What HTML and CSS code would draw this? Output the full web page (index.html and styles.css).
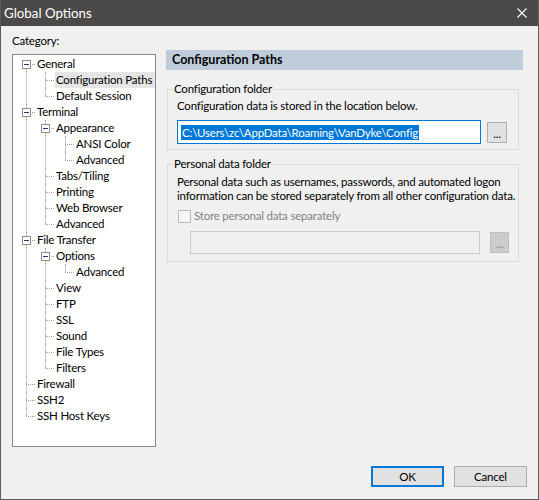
FILE: index.html
```html
<!DOCTYPE html>
<html>
<head>
<meta charset="utf-8">
<link rel="stylesheet" href="styles.css">
</head>
<body>
<div class="window">
  <div class="titlebar">
    <span class="title">Global Options</span>
    <svg class="close" width="10" height="10" viewBox="0 0 10 10"><path d="M0.5 0.5L9.5 9.5M9.5 0.5L0.5 9.5" stroke="#fff" stroke-width="1.1" fill="none"/></svg>
  </div>
  <div class="content">
    <div class="leftcol">
      <div class="cat-label">Category:</div>
      <div class="tree">
        <ul>
          <li><span class="tog"></span><span class="lbl">General</span>
            <ul>
              <li><span class="lbl sel">Configuration Paths</span></li>
              <li><span class="lbl">Default Session</span></li>
            </ul>
          </li>
          <li><span class="tog"></span><span class="lbl">Terminal</span>
            <ul>
              <li><span class="tog"></span><span class="lbl">Appearance</span>
                <ul>
                  <li><span class="lbl">ANSI Color</span></li>
                  <li><span class="lbl">Advanced</span></li>
                </ul>
              </li>
              <li><span class="lbl">Tabs/Tiling</span></li>
              <li><span class="lbl">Printing</span></li>
              <li><span class="lbl">Web Browser</span></li>
              <li><span class="lbl">Advanced</span></li>
            </ul>
          </li>
          <li><span class="tog"></span><span class="lbl">File Transfer</span>
            <ul>
              <li><span class="tog"></span><span class="lbl">Options</span>
                <ul>
                  <li><span class="lbl">Advanced</span></li>
                </ul>
              </li>
              <li><span class="lbl">View</span></li>
              <li><span class="lbl">FTP</span></li>
              <li><span class="lbl">SSL</span></li>
              <li><span class="lbl">Sound</span></li>
              <li><span class="lbl">File Types</span></li>
              <li><span class="lbl">Filters</span></li>
            </ul>
          </li>
          <li><span class="lbl">Firewall</span></li>
          <li><span class="lbl">SSH2</span></li>
          <li><span class="lbl">SSH Host Keys</span></li>
        </ul>
      </div>
    </div>
    <div class="rightcol">
      <div class="header">Configuration Paths</div>
      <fieldset class="group g1">
        <legend>Configuration folder</legend>
        <div class="desc">Configuration data is stored in the location below.</div>
        <div class="pathrow">
          <div class="textbox focus"><span class="selected">C:\Users\zc\AppData\Roaming\VanDyke\Config</span></div>
          <div class="dots">...</div>
        </div>
      </fieldset>
      <fieldset class="group g2">
        <legend>Personal data folder</legend>
        <div class="desc2">Personal data such as usernames, passwords, and automated logon<br>information can be stored separately from all other configuration data.</div>
        <div class="checkrow">
          <span class="checkbox"></span>
          <span class="disabled-text">Store personal data separately</span>
        </div>
        <div class="pathrow2">
          <div class="textbox disabled"></div>
          <div class="dots dis">...</div>
        </div>
      </fieldset>
    </div>
  </div>
  <div class="footer">
    <div class="btn default">OK</div>
    <div class="btn">Cancel</div>
  </div>
</div>
</body>
</html>
```
FILE: styles.css
```css
html, body {
  margin: 0;
  padding: 0;
  background: #f0f0f0;
}
body {
  font-family: Lato, "Noto Sans", sans-serif;
  font-size: 11.5px;
  letter-spacing: -0.2px;
  color: #000;
}
.window {
  width: 539px;
  height: 500px;
  box-sizing: border-box;
  border: 1px solid #5c5c5c;
  border-top: none;
  background: #f0f0f0;
  display: flex;
  flex-direction: column;
}
.titlebar {
  height: 26px;
  background: #4b4a48;
  display: flex;
  align-items: center;
  justify-content: space-between;
  padding: 0 11px 0 3px;
  flex: none;
}
.title {
  color: #fff;
  font-size: 13.3px;
  letter-spacing: 0;
  line-height: 26px;
}
.close {
  display: block;
}
.content {
  flex: 1;
  display: flex;
  align-items: flex-start;
  gap: 10px;
  padding: 7px 0 0 11px;
}
.leftcol {
  width: 144px;
  flex: none;
}
.cat-label {
  line-height: 16px;
  height: 16px;
}
.tree {
  margin-top: 5px;
  width: 144px;
  height: 393px;
  box-sizing: border-box;
  border: 1px solid #828790;
  background: #fff;
  padding-top: 1px;
  overflow: hidden;
}
.tree ul {
  list-style: none;
  margin: 0;
  padding: 0;
}
.tree ul ul {
  margin-left: -4px;
}
.tree ul ul ul {
  margin-left: -3px;
}
.tree li {
  position: relative;
  padding-left: 23px;
  line-height: 16px;
  white-space: nowrap;
}
.tree li::before {
  content: "";
  position: absolute;
  left: 13px;
  top: 8px;
  width: 9px;
  border-top: 1px dotted #a0a0a0;
}
.tree li::after {
  content: "";
  position: absolute;
  left: 13px;
  top: 0;
  bottom: 0;
  border-left: 1px dotted #a0a0a0;
}
.tree li:last-child::after {
  bottom: auto;
  height: 8px;
}
.tree > ul > li:first-child::after {
  top: 9px;
}
.tog {
  position: absolute;
  left: 9px;
  top: 4px;
  width: 9px;
  height: 9px;
  box-sizing: border-box;
  border: 1px solid #8e8f8f;
  background: #fff;
  z-index: 1;
}
.tog::before {
  content: "";
  position: absolute;
  left: 1px;
  top: 3px;
  width: 5px;
  height: 1px;
  background: #1c3d75;
}
.lbl {
  display: inline-block;
  padding: 0 3px 0 1px;
  height: 16px;
}
.lbl.sel {
  background: #e5e5e5;
}
.rightcol {
  margin-top: 17px;
  width: 357px;
  flex: none;
}
.header {
  height: 20px;
  line-height: 20px;
  background: #bfcddb;
  font-weight: bold;
  font-size: 12.5px;
  letter-spacing: 0;
  padding-left: 6px;
}
.group {
  margin: 0 4px 0 1px;
  border: 1px solid #dcdcdc;
  padding: 0 9px 5px 9px;
  min-width: 0;
}
.group legend {
  line-height: 16px;
  padding: 0 1px;
  margin-left: -4px;
}
.g1 {
  margin-top: 11px;
}
.g1 .desc {
  line-height: 16px;
  margin-top: 1px;
  white-space: nowrap;
}
.pathrow {
  display: flex;
  align-items: center;
  gap: 6px;
  margin-top: 6px;
}
.textbox {
  height: 24px;
  width: 304px;
  box-sizing: border-box;
  border: 1px solid #7a7a7a;
  background: #fff;
  display: flex;
  align-items: center;
  padding-left: 3px;
  flex: none;
}
.textbox.focus {
  border-color: #0078d7;
}
.selected {
  background: #0078d7;
  color: #fff;
  line-height: 15px;
  padding: 0 1px;
  white-space: nowrap;
}
.dots {
  width: 20px;
  height: 21px;
  box-sizing: border-box;
  border: 1px solid #adadad;
  background: #e1e1e1;
  text-align: center;
  line-height: 21px;
  flex: none;
}
.dots.dis {
  width: 19px;
  border-color: #bfbfbf;
  background: #cccccc;
  color: #838383;
}
.g2 {
  margin-top: 6px;
  padding-bottom: 7px;
}
.desc2 {
  line-height: 14px;
  margin-top: 3px;
  white-space: nowrap;
}
.checkrow {
  display: flex;
  align-items: center;
  height: 16px;
  margin-top: 5px;
  gap: 3px;
  margin-left: 1px;
}
.checkbox {
  width: 13px;
  height: 13px;
  box-sizing: border-box;
  border: 1px solid #bcbcbc;
  background: #f4f4f4;
  flex: none;
}
.disabled-text {
  color: #838383;
  line-height: 16px;
}
.pathrow2 {
  display: flex;
  align-items: center;
  gap: 10px;
  margin-top: 7px;
  padding-left: 13px;
}
.textbox.disabled {
  width: 290px;
  height: 23px;
  border-color: #cccccc;
  background: #f0f0f0;
}
.footer {
  flex: none;
  display: flex;
  justify-content: flex-end;
  gap: 10px;
  padding: 0 11px 12px 0;
}
.btn {
  width: 73px;
  height: 21px;
  box-sizing: border-box;
  border: 1px solid #adadad;
  background: #e1e1e1;
  text-align: center;
  line-height: 19px;
}
.btn.default {
  border: 2px solid #0078d7;
  line-height: 17px;
}
```
